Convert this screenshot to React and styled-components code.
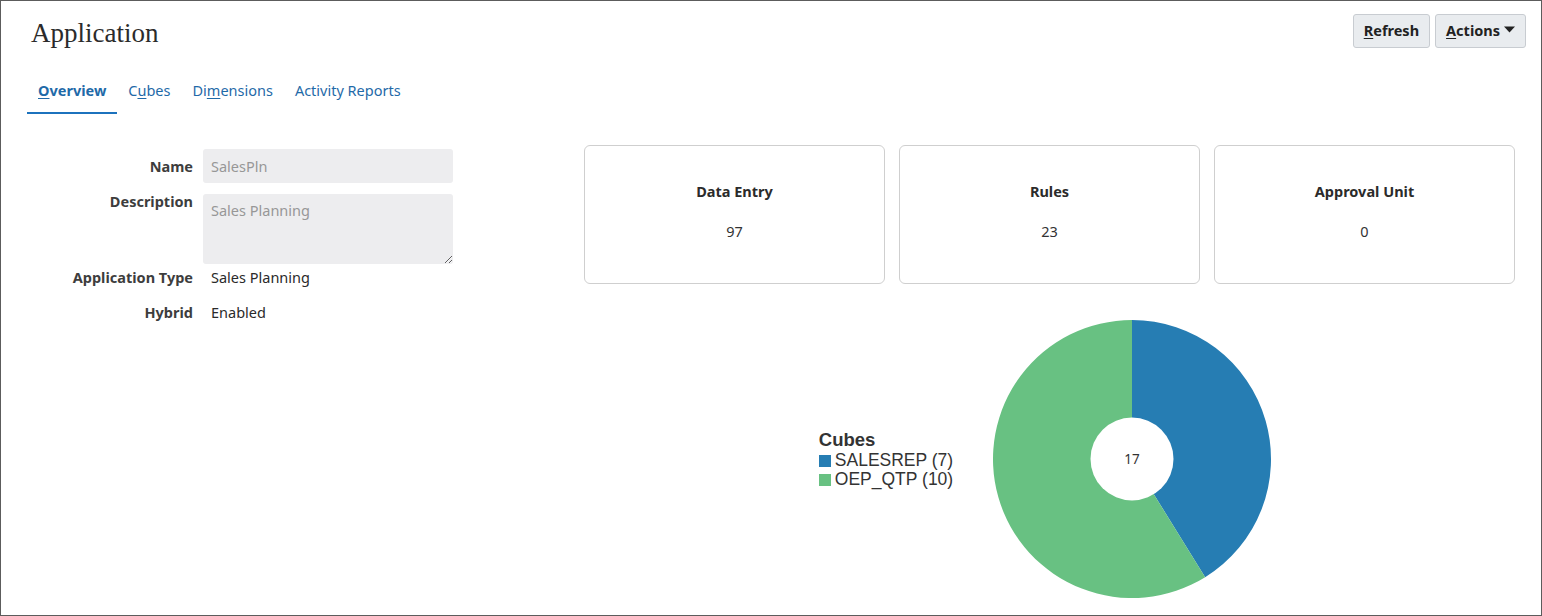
import React from 'react';
import styled, { createGlobalStyle } from 'styled-components';

const GlobalStyle = createGlobalStyle`
  html, body {
    margin: 0;
    padding: 0;
    background: #fff;
  }
  body {
    font-family: "Noto Sans", "Open Sans", Arial, sans-serif;
    color: #333;
  }
`;

const Frame = styled.div`
  box-sizing: border-box;
  width: 1542px;
  height: 616px;
  border: 1px solid #5c5c5c;
  background: #fff;
  overflow: hidden;
`;

const Header = styled.header`
  display: flex;
  justify-content: space-between;
  align-items: flex-start;
  padding: 13px 15px 0 26px;
`;

const Title = styled.h1`
  margin: 2px 0 0 4px;
  font-family: "Liberation Serif", "Times New Roman", serif;
  font-weight: normal;
  font-size: 27px;
  line-height: 34px;
  color: #2b2b2b;
`;

const Toolbar = styled.div`
  display: flex;
  gap: 5px;
`;

const Button = styled.button`
  display: flex;
  align-items: center;
  gap: 4px;
  box-sizing: border-box;
  height: 34px;
  padding: 0 10px 3px;
  background: #e9ecef;
  border: 1px solid #c8ccd1;
  border-radius: 3px;
  font-family: inherit;
  font-size: 14.5px;
  font-weight: bold;
  color: #222;
  cursor: pointer;

  u {
    text-decoration-thickness: 1px;
    text-underline-offset: 2px;
  }
`;

const Tabs = styled.nav`
  display: flex;
  margin: 20px 0 0 26px;
`;

const Tab = styled.a`
  display: block;
  padding: 10px 11px 12px;
  line-height: 20px;
  font-size: 14.5px;
  color: #1f6aa8;
  font-weight: ${(p) => (p.$active ? 'bold' : 'normal')};
  border-bottom: 2px solid ${(p) => (p.$active ? '#1c72bd' : 'transparent')};
  text-decoration: none;
  cursor: pointer;

  u {
    text-underline-offset: 2px;
  }
`;

const Main = styled.main`
  display: grid;
  grid-template-columns: 557px 930px;
  margin: 31px 0 0 26px;
`;

const Form = styled.div`
  padding-top: 4px;
`;

const Row = styled.div`
  display: flex;
  align-items: ${(p) => (p.$top ? 'flex-start' : 'center')};
  gap: 10px;
  margin-bottom: ${(p) => p.$mb || 0}px;
`;

const Label = styled.div`
  width: 166px;
  flex: none;
  text-align: right;
  font-size: 14.5px;
  line-height: 20px;
  font-weight: bold;
  color: #3d3d3d;
  margin-top: ${(p) => p.$offset || 0}px;
`;

const Value = styled.div`
  padding-left: 8px;
  font-size: 14.5px;
  line-height: 20px;
  color: #2a2a2a;
`;

const Field = styled.input`
  box-sizing: border-box;
  width: 250px;
  height: 34px;
  padding: 0 8px;
  border: none;
  border-radius: 3px;
  background: #ededef;
  font-family: inherit;
  font-size: 14.5px;
  color: #979797;
  outline: none;
`;

const Area = styled.textarea`
  box-sizing: border-box;
  display: block;
  width: 250px;
  height: 70px;
  padding: 6px 8px;
  border: none;
  border-radius: 3px;
  background: #ededef;
  font-family: inherit;
  font-size: 14.5px;
  line-height: 20px;
  color: #979797;
  outline: none;
  resize: both;
`;

const Side = styled.div`
  display: flex;
  flex-direction: column;
`;

const Cards = styled.div`
  display: grid;
  grid-template-columns: repeat(3, 301px);
  gap: 14px;
`;

const Card = styled.div`
  box-sizing: border-box;
  height: 139px;
  border: 1px solid #cfcfcf;
  border-radius: 6px;
  padding-top: 35px;
  text-align: center;
`;

const CardTitle = styled.div`
  font-size: 14.5px;
  line-height: 20px;
  font-weight: bold;
  color: #2b2b2b;
`;

const CardValue = styled.div`
  margin-top: 20px;
  font-size: 14.5px;
  line-height: 20px;
  color: #333;
`;

const Chart = styled.div`
  display: flex;
  align-items: center;
  justify-content: center;
  gap: 39px;
  margin-top: 35px;
  padding-right: 7px;
`;

const Legend = styled.div`
  font-family: "Liberation Sans", Arial, sans-serif;
  color: #333;
`;

const LegendTitle = styled.div`
  font-size: 18.5px;
  line-height: 22px;
  font-weight: bold;
`;

const LegendItem = styled.div`
  display: flex;
  align-items: center;
  gap: 4px;
  font-size: 17.5px;
  line-height: 19px;
`;

const Swatch = styled.span`
  width: 12px;
  height: 12px;
  background: ${(p) => p.$color};
`;

const cubes = [
  { name: 'SALESREP', count: 7, color: '#267db3' },
  { name: 'OEP_QTP', count: 10, color: '#68c182' },
];

const Donut = ({ data, size = 280, radius = 139, hole = 41.5 }) => {
  const total = data.reduce((s, d) => s + d.count, 0);
  const c = size / 2;
  let angle = 0;
  const slices = data.map((d) => {
    const start = angle;
    angle += (d.count / total) * Math.PI * 2;
    const x1 = c + radius * Math.sin(start);
    const y1 = c - radius * Math.cos(start);
    const x2 = c + radius * Math.sin(angle);
    const y2 = c - radius * Math.cos(angle);
    const large = angle - start > Math.PI ? 1 : 0;
    return (
      <path
        key={d.name}
        d={`M${c} ${c} L${x1} ${y1} A${radius} ${radius} 0 ${large} 1 ${x2} ${y2} Z`}
        fill={d.color}
      />
    );
  });
  return (
    <svg width={size} height={size} viewBox={`0 0 ${size} ${size}`}>
      {slices}
      <circle cx={c} cy={c} r={hole} fill="#fff" />
      <text
        x={c}
        y={c + 5}
        textAnchor="middle"
        fontSize="13.5"
        fontFamily="Noto Sans, sans-serif"
        fill="#333"
      >
        {total}
      </text>
    </svg>
  );
};

const stats = [
  { title: 'Data Entry', value: 97 },
  { title: 'Rules', value: 23 },
  { title: 'Approval Unit', value: 0 },
];

const App = () => {
  return (
    <>
      <GlobalStyle />
      <Frame>
        <Header>
          <Title>Application</Title>
          <Toolbar>
            <Button>
              <span><u>R</u>efresh</span>
            </Button>
            <Button>
              <span><u>A</u>ctions</span>
              <svg width="11" height="7" viewBox="0 0 11 7">
                <path d="M0 0.5 L11 0.5 L5.5 6.5 Z" fill="#222" />
              </svg>
            </Button>
          </Toolbar>
        </Header>

        <Tabs>
          <Tab $active><u>O</u>verview</Tab>
          <Tab>C<u>u</u>bes</Tab>
          <Tab>Di<u>m</u>ensions</Tab>
          <Tab>Activity Reports</Tab>
        </Tabs>

        <Main>
          <Form>
            <Row $mb={11}>
              <Label>Name</Label>
              <Field readOnly value="SalesPln" />
            </Row>
            <Row $top $mb={3}>
              <Label $offset={-3}>Description</Label>
              <Area readOnly value="Sales Planning" />
            </Row>
            <Row $mb={15}>
              <Label>Application Type</Label>
              <Value>Sales Planning</Value>
            </Row>
            <Row>
              <Label>Hybrid</Label>
              <Value>Enabled</Value>
            </Row>
          </Form>

          <Side>
            <Cards>
              {stats.map((s) => (
                <Card key={s.title}>
                  <CardTitle>{s.title}</CardTitle>
                  <CardValue>{s.value}</CardValue>
                </Card>
              ))}
            </Cards>

            <Chart>
              <Legend>
                <LegendTitle>Cubes</LegendTitle>
                {cubes.map((c) => (
                  <LegendItem key={c.name}>
                    <Swatch $color={c.color} />
                    {c.name} ({c.count})
                  </LegendItem>
                ))}
              </Legend>
              <Donut data={cubes} />
            </Chart>
          </Side>
        </Main>
      </Frame>
    </>
  );
};

export default App;
